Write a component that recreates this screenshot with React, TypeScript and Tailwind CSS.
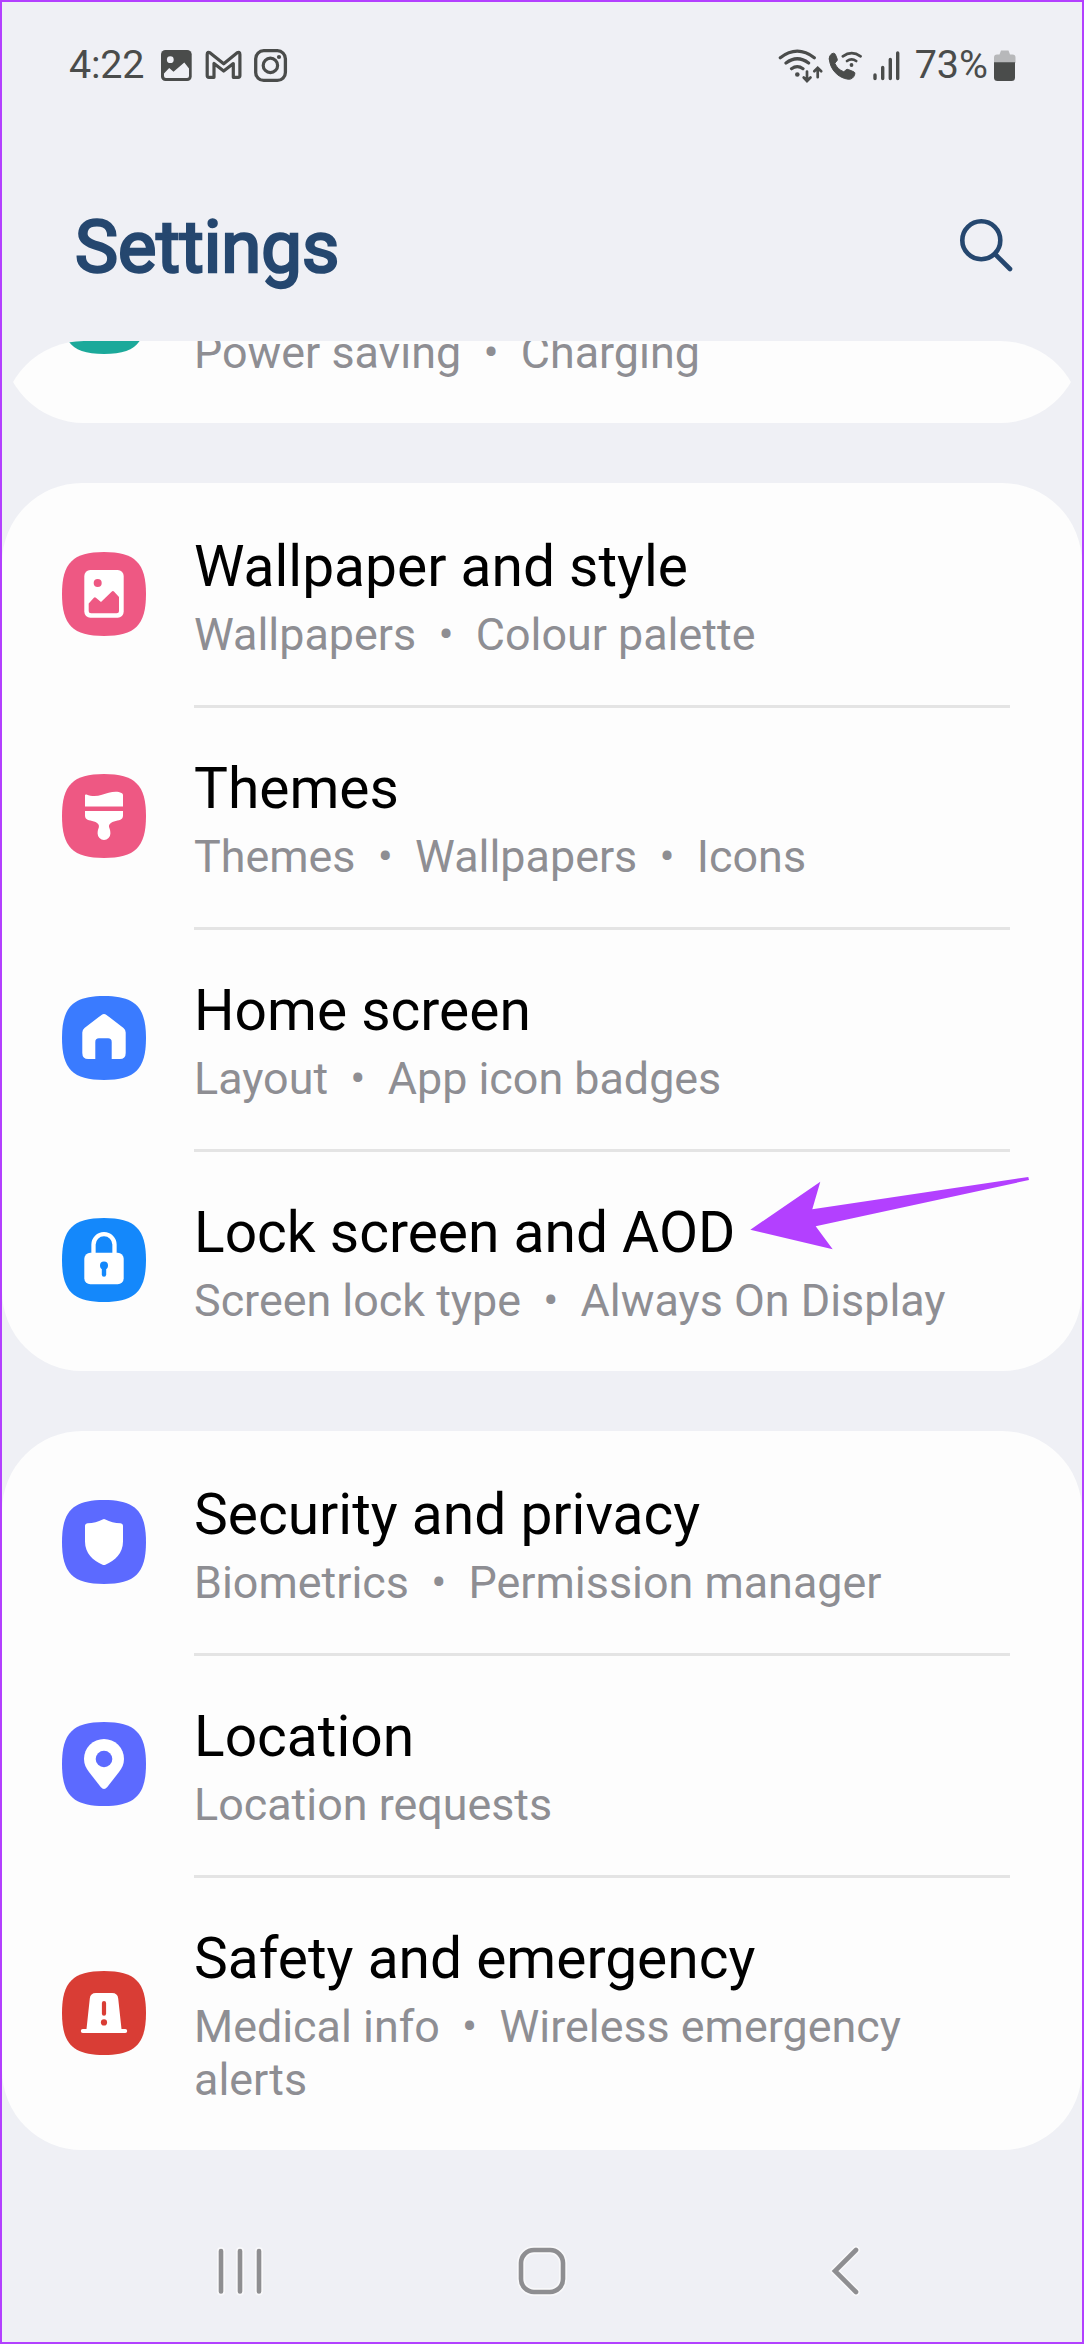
import type { ReactNode } from "react";

const Squircle = ({
  className,
  children,
}: {
  className: string;
  children?: ReactNode;
}) => (
  <svg className={`size-[84px] ${className}`} viewBox="0 0 84 84">
    <path
      d="M42 0C73 0 84 11 84 42S73 84 42 84 0 73 0 42 11 0 42 0Z"
      fill="currentColor"
    />
    {children}
  </svg>
);

const WallpaperIcon = () => (
  <Squircle className="text-[#ee5883]">
    <rect x="22.3" y="18" width="39.4" height="47.7" rx="6" fill="#fff" />
    <circle cx="35.7" cy="31" r="4" fill="currentColor" />
    <path
      d="M26.7 51.5l5.2-5.8q1-1 2 0l5.1 4.2 10.6-10.2q1.3-1.2 2.6 0l4.8 5.3v13.8q0 2.5-2.5 2.5H29.2q-2.5 0-2.5-2.5Z"
      fill="currentColor"
    />
  </Squircle>
);

const ThemesIcon = () => (
  <Squircle className="text-[#ee5883]">
    <path
      d="M23 21.5q0-1.5 1.5-1c5 2 10 2 15.5.3 6-2 14-4.5 19.5-1.8q1.5.7 1.5 2V32.5H23Z"
      fill="#fff"
    />
    <path
      d="M23 37H61V41.5C61 46 57 46 52 47.5 47.5 49 46.6 51 47.2 53.5 48 55.5 48.4 57 48.4 59.5A6.4 6.4 0 0 1 35.6 59.5C35.6 57 36 55.5 36.8 53.5 37.4 51 36.5 49 32 47.5 27 46 23 46 23 41.5Z"
      fill="#fff"
    />
  </Squircle>
);

const HomeIcon = () => (
  <Squircle className="text-[#3a7bff]">
    <path
      d="M39.5 18.9Q42 17.1 44.5 18.9L61.5 32Q63.7 33.9 63.7 36.5V57Q63.7 63 57.7 63H49.7V46Q49.7 42.3 46 42.3H37Q33.3 42.3 33.3 46V63H26.3Q20.3 63 20.3 57V36.5Q20.3 33.9 22.5 32Z"
      fill="#fff"
    />
  </Squircle>
);

const LockIcon = () => (
  <Squircle className="text-[#1488fb]">
    <path
      d="M31.5 37V26.6a10.5 10.5 0 0 1 21 0V37"
      fill="none"
      stroke="#fff"
      strokeWidth="4.3"
    />
    <rect x="22.3" y="34.7" width="39.4" height="31.6" rx="6" fill="#fff" />
    <circle cx="42" cy="47.6" r="4" fill="currentColor" />
    <path d="M42 48V56.5" stroke="currentColor" strokeWidth="4.4" strokeLinecap="round" />
  </Squircle>
);

const ShieldIcon = () => (
  <Squircle className="text-[#5c6aff]">
    <path
      d="M40.6 19.4Q42 18.8 43.4 19.4 50 22.8 58.5 23.3 61 23.6 61 26V41.5C61 53.5 53 60.5 43.4 64.7Q42 65.3 40.6 64.7C31 60.5 23 53.5 23 41.5V26Q23 23.6 25.5 23.3 34 22.8 40.6 19.4Z"
      fill="#fff"
    />
  </Squircle>
);

const LocationIcon = () => (
  <Squircle className="text-[#5c6aff]">
    <path
      d="M42 17A20 20 0 0 1 62 37C62 42.5 60 46 57 50L45.3 65Q42 69 38.7 65L27 50C24 46 22 42.5 22 37A20 20 0 0 1 42 17Z"
      fill="#fff"
    />
    <circle cx="42" cy="37" r="8.3" fill="currentColor" />
  </Squircle>
);

const EmergencyIcon = () => (
  <Squircle className="text-[#d93d35]">
    <path
      d="M34 22H50Q55.7 22 56.2 27.5L59.5 58H63.2a2 2 0 0 1 0 4H20.8a2 2 0 0 1 0-4H24.5L27.8 27.5Q28.3 22 34 22Z"
      fill="#fff"
    />
    <path d="M42 32V42.7" stroke="currentColor" strokeWidth="4.2" strokeLinecap="round" />
    <circle cx="42" cy="51.4" r="3.1" fill="currentColor" />
  </Squircle>
);

type Item = {
  title: string;
  details: string[];
  icon: ReactNode;
};

const personalItems: Item[] = [
  {
    title: "Wallpaper and style",
    details: ["Wallpapers", "Colour palette"],
    icon: <WallpaperIcon />,
  },
  {
    title: "Themes",
    details: ["Themes", "Wallpapers", "Icons"],
    icon: <ThemesIcon />,
  },
  {
    title: "Home screen",
    details: ["Layout", "App icon badges"],
    icon: <HomeIcon />,
  },
  {
    title: "Lock screen and AOD",
    details: ["Screen lock type", "Always On Display"],
    icon: <LockIcon />,
  },
];

const securityItems: Item[] = [
  {
    title: "Security and privacy",
    details: ["Biometrics", "Permission manager"],
    icon: <ShieldIcon />,
  },
  {
    title: "Location",
    details: ["Location requests"],
    icon: <LocationIcon />,
  },
  {
    title: "Safety and emergency",
    details: ["Medical info", "Wireless emergency alerts"],
    icon: <EmergencyIcon />,
  },
];

const Details = ({ details }: { details: string[] }) => (
  <p className="text-[44.85px] leading-[53px] whitespace-pre-wrap text-[#8e8e93]">
    {details.join("  •  ")}
  </p>
);

const SettingsRow = ({ item, divider }: { item: Item; divider?: boolean }) => (
  <div className="flex items-center pr-[72px] pl-[60px]">
    {item.icon}
    <div
      className={`ml-12 flex-1 pb-[44px] ${
        divider ? "border-t-[3px] border-[#e4e4e4] pt-[47px]" : "pt-[50px]"
      }`}
    >
      <h2 className="mb-2 text-[56.9px] leading-[67px] text-black">{item.title}</h2>
      <Details details={item.details} />
    </div>
  </div>
);

const SettingsCard = ({ items }: { items: Item[] }) => (
  <section className="rounded-[80px] bg-[#fdfdfd]">
    {items.map((item, i) => (
      <SettingsRow key={item.title} item={item} divider={i > 0} />
    ))}
  </section>
);

const StatusBar = () => (
  <div className="flex h-[126px] items-center justify-between pr-[66px] pl-[67px] text-[39.5px] text-[#4a4c4b]">
    <div className="flex items-center">
      <span className="tracking-[-0.2px]">4:22</span>
      <svg className="ml-4 h-9 w-[130px]" viewBox="160 47 130 36" fill="none">
        <rect x="161" y="50" width="30.7" height="31" rx="4.5" fill="currentColor" />
        <circle cx="170.3" cy="59.7" r="3.4" fill="#eff0f5" />
        <path
          d="M164 73.5l5.2-5.5 4.3 3.7 10.8-9.3 4.7 6V76q0 2-2 2H166q-2 0-2-2Z"
          fill="#eff0f5"
        />
        {/* Gmail */}
        <path
          d="M207.2 54.5q0-3.5 3-1.6L223.7 63.8 236.9 52.9q3-1.9 3 1.6V75.5q0 1.8-1.8 1.8H233.3V63.5L223.7 71 214 63.5V77.3H209q-1.8 0-1.8-1.8Z"
          stroke="currentColor"
          strokeWidth="3.2"
          strokeLinejoin="round"
        />
        <rect x="255.7" y="50.7" width="29.7" height="29.7" rx="8" stroke="currentColor" strokeWidth="3.3" />
        <circle cx="270.4" cy="65.4" r="7.2" stroke="currentColor" strokeWidth="3.2" />
        <circle cx="279" cy="57" r="2.1" fill="currentColor" />
      </svg>
    </div>
    <div className="flex items-center">
      <svg className="h-9 w-[124px]" viewBox="778 47 124 36" fill="none" stroke="currentColor" strokeLinecap="round">
        <path d="M780.3 57.7q17-13 34 0M786 63q11.3-8.5 22.6 0M791.5 68.7q5.8-4 11.5 0" strokeWidth="3.2" />
        <circle cx="797.3" cy="74.5" r="2.3" fill="currentColor" stroke="none" />
        <path
          d="M807 71.5V80.5M803.7 77.5l3.3 3.5 3.5-3.5M817.7 77.2V68.5M814.3 71.3l3.4-3.5 3.5 3.5"
          strokeWidth="2.7"
        />
        {/* Wi-Fi calling */}
        <path
          d="M829.3 59C829 56 831 53.5 833.5 53.2q1.5 0 2 1.5l1.7 4.3q.4 1.3-.6 2.3l-1.8 1.9c2 4.3 4.5 6.8 9 8.6l2.2-1.9q1-1 2.3-.4l5.5 2.3q1.5.7 1 2.3C854 77.5 851.5 79.5 848.5 79.3 838 78 830 69.5 829.3 59Z"
          fill="currentColor"
          strokeWidth="1"
        />
        <path d="M842.8 56.3q8.9-6.3 17.8 0M847 61q4.6-3.3 9.2 0" strokeWidth="2.7" />
        <circle cx="851.5" cy="65" r="1.9" fill="currentColor" stroke="none" />
        <path d="M875 75V78.5M882.7 67.5V78.5M890.3 59.5V78.5M897.7 53V78.5" strokeWidth="3.4" />
      </svg>
      <span className="ml-[13px]">73%</span>
      <svg className="ml-1.5 h-9 w-[22px]" viewBox="994 47 22 36">
        <path d="M994 63v-5.5q0-3 3-3h2.5L1001 50.5h7.5l1.5 4h2.5q3 0 3 3V63Z" fill="#b7b8ba" />
        <path d="M994 62.3H1015V77.5q0 3.5-3.5 3.5H997.5Q994 81 994 77.5Z" fill="currentColor" />
      </svg>
    </div>
  </div>
);

const NavBar = () => (
  <nav className="flex items-center pt-[90px] pl-[211px]">
    <svg className="h-[60px] w-14" viewBox="0 0 56 60" fill="none" strokeLinecap="round">
      <path d="M8 11V51.5M27 11V51.5M46 11V51.5" stroke="#f8f8fa" strokeWidth="8" />
      <path d="M8 11V51.5M27 11V51.5M46 11V51.5" stroke="#8e8e91" strokeWidth="4.6" />
    </svg>
    <svg className="ml-[245px] h-[60px] w-14" viewBox="0 0 56 60" fill="none">
      <rect x="7" y="10" width="42" height="42" rx="13" stroke="#f8f8fa" strokeWidth="8" />
      <rect x="7" y="10" width="42" height="42" rx="13" stroke="#8e8e91" strokeWidth="4.6" />
    </svg>
    <svg className="ml-[258px] h-[60px] w-9" viewBox="0 0 36 60" fill="none" strokeLinecap="round">
      <path d="M28 10L7 31 28 52" stroke="#f8f8fa" strokeWidth="8" />
      <path d="M28 10L7 31 28 52" stroke="#8e8e91" strokeWidth="4.6" />
    </svg>
  </nav>
);

export default function App() {
  return (
    <div className="flex h-[2344px] w-[1084px] flex-col overflow-hidden border-2 border-[#b340ff] bg-[#eff0f5] font-[Roboto,sans-serif]">
      <StatusBar />

      <header className="flex h-[213px] items-start justify-between pt-[76px] pr-[68px] pl-[73px]">
        <h1 className="text-[72.4px] leading-[88px] font-normal text-[#25476f] [-webkit-text-stroke:2.6px_#25476f]">
          Settings
        </h1>
        <svg className="mt-[13px] size-14" viewBox="958 217 56 56" fill="none" stroke="#25476f" strokeLinecap="round">
          <circle cx="981.3" cy="240.3" r="19" strokeWidth="4.6" />
          <path d="M995.5 254.5L1010 269" strokeWidth="4.6" />
        </svg>
      </header>

      <main className="flex flex-col gap-[60px]">
        {/* Battery card, scrolled under the header */}
        <div className="flex h-[82px] flex-col justify-end overflow-hidden rounded-t-[82px]">
          <div className="flex shrink-0 items-end gap-12 rounded-b-[82px] bg-[#fdfdfd] pr-[72px] pb-[44px] pl-[60px]">
            <Squircle className="mb-[25px] text-[#1ba99a]" />
            <Details details={["Power saving", "Charging"]} />
          </div>
        </div>

        <div className="relative">
          <SettingsCard items={personalItems} />
          <svg
            className="absolute top-[690px] left-[744px] h-[80px] w-[288px]"
            viewBox="746 1173 288 80"
          >
            <path
              d="M750.3 1229.7L820.3 1181.7 812.3 1209.3 1028.3 1177 1029 1180 815.7 1226.3 832.7 1249.3Z"
              fill="#b340ff"
            />
          </svg>
        </div>

        <SettingsCard items={securityItems} />
      </main>

      <NavBar />
    </div>
  );
}
